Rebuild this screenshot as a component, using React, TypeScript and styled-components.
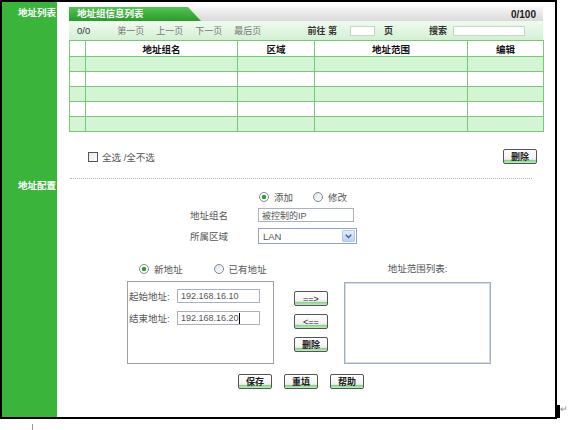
import React from 'react';
import styled, { createGlobalStyle } from 'styled-components';

// 地址组配置页面
const GlobalStyle = createGlobalStyle`
  html, body {
    margin: 0;
    padding: 0;
    background: #fff;
  }
  body {
    font-family: "Liberation Sans", "Noto Sans CJK SC", sans-serif;
    font-size: 10px;
    color: #333;
  }
`;

const Page = styled.div`
  position: relative;
  width: 570px;
  height: 430px;
`;

const Frame = styled.div`
  box-sizing: border-box;
  width: 557px;
  height: 419px;
  border: 2px solid #000;
  display: grid;
  grid-template-columns: 55px 1fr;
  grid-template-rows: 174px 1fr;
`;

const SideCell = styled.div<{ $top: number }>`
  background: #3bb43b;
  color: #fff;
  font-weight: bold;
  font-size: 9.5px;
  line-height: 12px;
  padding: ${p => p.$top}px 0 0 16px;
  white-space: nowrap;
`;

const ListSection = styled.div`
  padding: 5px 0 0 12px;
`;

const Panel = styled.div`
  width: 474px;
`;

const HeaderBar = styled.div`
  display: flex;
  align-items: center;
  height: 14px;
  background: linear-gradient(#f7f7f7, #d9d9d9);
`;

const Tab = styled.div`
  box-sizing: border-box;
  width: 132px;
  height: 14px;
  padding-left: 8px;
  background: linear-gradient(#56c456, #2a9a2a);
  clip-path: polygon(0 0, calc(100% - 13px) 0, 100% 100%, 0 100%);
  color: #fff;
  font-weight: bold;
  font-size: 9.5px;
  line-height: 14px;
`;

const Count = styled.div`
  margin-left: auto;
  padding-right: 7px;
  font-weight: bold;
  font-size: 10px;
  color: #222;
`;

const Toolbar = styled.div`
  display: flex;
  align-items: center;
  height: 19px;
  padding: 0 18px 0 8px;
  background: linear-gradient(#f0fbf0, #d3f0d3);
  font-size: 9px;
`;

const PageInfo = styled.span`
  color: #333;
  font-size: 9.5px;
`;

const NavGroup = styled.div`
  display: flex;
  gap: 12px;
  margin-left: 27px;
`;

const NavLink = styled.span`
  color: #777;
`;

const JumpGroup = styled.div`
  display: flex;
  align-items: center;
  margin-left: auto;
`;

const BoldText = styled.span<{ $gap?: number }>`
  font-weight: bold;
  color: #333;
  margin-left: ${p => p.$gap ?? 0}px;
`;

const MiniInput = styled.div<{ $w: number; $gap: number }>`
  box-sizing: border-box;
  width: ${p => p.$w}px;
  height: 10px;
  margin-left: ${p => p.$gap}px;
  background: #fff;
  border: 1px solid #c6d6c6;
`;

const Table = styled.table`
  width: 474px;
  border-collapse: collapse;
  table-layout: fixed;
  border: 1px solid #78c878;
`;

const Th = styled.th`
  height: 15px;
  padding: 0;
  border: 1px solid #78c878;
  background: #fff;
  font-size: 9.5px;
  font-weight: bold;
  color: #111;
`;

const Td = styled.td<{ $green: boolean }>`
  height: 14px;
  padding: 0;
  border: 1px solid #78c878;
  background: ${p => (p.$green ? '#d4f5d4' : '#fff')};
`;

const SelectRow = styled.div`
  display: flex;
  align-items: center;
  justify-content: space-between;
  width: 474px;
  height: 15px;
  margin-top: 17px;
  box-sizing: border-box;
  padding: 0 6px 0 19px;
`;

const CheckLabel = styled.label`
  display: flex;
  align-items: center;
  gap: 4px;
  color: #555;
  font-size: 9.5px;
`;

const CheckBox = styled.span`
  box-sizing: border-box;
  width: 10px;
  height: 10px;
  border: 1px solid #555;
  background: linear-gradient(135deg, #e6e6e6, #fff);
`;

const Btn = styled.button<{ $plain?: boolean }>`
  box-sizing: border-box;
  width: 34px;
  height: 15px;
  padding: 0;
  border: 1px solid #555;
  border-radius: 2px;
  background: linear-gradient(#fff 0%, #f4f4f4 62%, #e6e6e6 74%, #86d486 80%, #c2ebc2 100%);
  font-family: "Liberation Sans", "Noto Sans CJK SC", sans-serif;
  font-size: 9px;
  font-weight: ${p => (p.$plain ? 'normal' : 'bold')};
  color: #222;
  line-height: 12px;
`;

const ConfigSection = styled.div``;

const Divider = styled.div`
  width: 462px;
  margin: 2px 0 0 13px;
  border-top: 1px dotted #b5b5b5;
`;

const ModeRow = styled.div`
  display: flex;
  align-items: center;
  height: 13px;
  margin: 11px 0 0 202px;
`;

const RadioOption = styled.label<{ $space: number }>`
  display: inline-flex;
  align-items: center;
  gap: 5px;
  margin-right: ${p => p.$space}px;
  color: #555;
  font-size: 9.5px;
`;

const RadioDot = styled.span<{ $on?: boolean }>`
  box-sizing: border-box;
  width: 10px;
  height: 10px;
  border-radius: 50%;
  border: 1px solid #7d8a99;
  background: ${p =>
    p.$on
      ? 'radial-gradient(circle, #2d9e2d 0 2px, #fff 2.5px)'
      : 'linear-gradient(135deg, #dfe3e8, #fff)'};
`;

const FormGrid = styled.div`
  display: grid;
  grid-template-columns: 68px auto;
  row-gap: 6px;
  align-items: center;
  margin: 5px 0 0 133px;
`;

const FieldLabel = styled.span`
  color: #555;
  font-size: 9.5px;
`;

const TextBox = styled.div<{ $w: number; $h?: number }>`
  box-sizing: border-box;
  display: flex;
  align-items: center;
  width: ${p => p.$w}px;
  height: ${p => p.$h ?? 14}px;
  padding-left: 3px;
  border: 1px solid #a9b2bc;
  background: #fff;
  color: #555;
  font-size: 9px;
`;

const Caret = styled.span`
  width: 1px;
  height: 11px;
  background: #000;
`;

const SelectBox = styled.div`
  box-sizing: border-box;
  display: flex;
  align-items: center;
  width: 99px;
  height: 16px;
  padding-left: 4px;
  border: 1px solid #8fa6c2;
  background: #fff;
  color: #555;
  font-size: 9.5px;
`;

const SelectArrow = styled.span`
  box-sizing: border-box;
  display: flex;
  align-items: center;
  justify-content: center;
  width: 13px;
  height: 12px;
  margin: 0 1px 0 auto;
  border: 1px solid #b7c8ec;
  border-radius: 1px;
  background: linear-gradient(#e4ecfc, #bccff3);
`;

const AddressArea = styled.div`
  display: flex;
  align-items: flex-start;
  margin: 19px 0 0 70px;
`;

const LeftCol = styled.div`
  width: 147px;
`;

const TypeRow = styled.div`
  display: flex;
  align-items: center;
  height: 12px;
  padding-left: 12px;
`;

const RangeBox = styled.div`
  box-sizing: border-box;
  height: 83px;
  margin-top: 6px;
  padding: 7px 0 0 1px;
  border: 1px solid #a0a0a0;
  display: flex;
  flex-direction: column;
  gap: 8px;
`;

const RangeRow = styled.div`
  display: flex;
  align-items: center;
`;

const RangeLabel = styled.span`
  width: 48px;
  color: #555;
  font-size: 9.5px;
`;

const MiddleCol = styled.div`
  display: flex;
  flex-direction: column;
  gap: 8px;
  margin-left: 20px;
  padding-top: 28px;
`;

const RightCol = styled.div`
  width: 147px;
  margin-left: 16px;
`;

const ListTitle = styled.div`
  height: 12px;
  line-height: 12px;
  text-align: center;
  color: #555;
  font-size: 9.5px;
`;

const ListBox = styled.div`
  box-sizing: border-box;
  height: 82px;
  margin-top: 7px;
  border: 1px solid #9fb1c1;
  box-shadow: inset 0 0 0 1px #d3dce4;
  background: #fff;
`;

const ActionRow = styled.div`
  display: flex;
  gap: 12px;
  margin: 10px 0 0 181px;
`;

const EndCursor = styled.span`
  position: absolute;
  left: 556px;
  top: 405px;
  width: 4px;
  height: 13px;
  background: #000;
`;

const ReturnMark = styled.span`
  position: absolute;
  left: 560px;
  top: 404px;
  font-size: 9px;
  color: #888;
`;

const StrayMark = styled.span`
  position: absolute;
  left: 32px;
  top: 424px;
  width: 1px;
  height: 6px;
  background: #999;
`;

const headers = ['', '地址组名', '区域', '地址范围', '编辑'];
const widths = [16, 152, 77, 153, 76];
const rows = [0, 1, 2, 3, 4];

const Chevron = () => (
  <svg width="7" height="5" viewBox="0 0 7 5">
    <path d="M0.8 0.8 L3.5 3.5 L6.2 0.8" fill="none" stroke="#4a5f86" strokeWidth="1.4" />
  </svg>
);

const App: React.FC = () => {
  return (
    <Page>
      <GlobalStyle />
      <Frame>
        <SideCell $top={5}>地址列表</SideCell>
        <ListSection>
          <Panel>
            <HeaderBar>
              <Tab>地址组信息列表</Tab>
              <Count>0/100</Count>
            </HeaderBar>
            <Toolbar>
              <PageInfo>0/0</PageInfo>
              <NavGroup>
                <NavLink>第一页</NavLink>
                <NavLink>上一页</NavLink>
                <NavLink>下一页</NavLink>
                <NavLink>最后页</NavLink>
              </NavGroup>
              <JumpGroup>
                <BoldText>前往 第</BoldText>
                <MiniInput $w={25} $gap={13} />
                <BoldText $gap={9}>页</BoldText>
                <BoldText $gap={36}>搜索</BoldText>
                <MiniInput $w={72} $gap={6} />
              </JumpGroup>
            </Toolbar>
            <Table>
              <colgroup>
                {widths.map((w, i) => (
                  <col key={i} style={{ width: w }} />
                ))}
              </colgroup>
              <thead>
                <tr>
                  {headers.map((h, i) => (
                    <Th key={i}>{h}</Th>
                  ))}
                </tr>
              </thead>
              <tbody>
                {rows.map(r => (
                  <tr key={r}>
                    {headers.map((_, i) => (
                      <Td key={i} $green={r % 2 === 0} />
                    ))}
                  </tr>
                ))}
              </tbody>
            </Table>
          </Panel>
          <SelectRow>
            <CheckLabel>
              <CheckBox />
              全选 /全不选
            </CheckLabel>
            <Btn>删除</Btn>
          </SelectRow>
        </ListSection>

        <SideCell $top={4}>地址配置</SideCell>
        <ConfigSection>
          <Divider />
          <ModeRow>
            <RadioOption $space={20}>
              <RadioDot $on />
              添加
            </RadioOption>
            <RadioOption $space={0}>
              <RadioDot />
              修改
            </RadioOption>
          </ModeRow>
          <FormGrid>
            <FieldLabel>地址组名</FieldLabel>
            <TextBox $w={96}>被控制的IP</TextBox>
            <FieldLabel>所属区域</FieldLabel>
            <SelectBox>
              LAN
              <SelectArrow>
                <Chevron />
              </SelectArrow>
            </SelectBox>
          </FormGrid>
          <AddressArea>
            <LeftCol>
              <TypeRow>
                <RadioOption $space={31}>
                  <RadioDot $on />
                  新地址
                </RadioOption>
                <RadioOption $space={0}>
                  <RadioDot />
                  已有地址
                </RadioOption>
              </TypeRow>
              <RangeBox>
                <RangeRow>
                  <RangeLabel>起始地址:</RangeLabel>
                  <TextBox $w={83} $h={14}>192.168.16.10</TextBox>
                </RangeRow>
                <RangeRow>
                  <RangeLabel>结束地址:</RangeLabel>
                  <TextBox $w={83} $h={14}>
                    192.168.16.20
                    <Caret />
                  </TextBox>
                </RangeRow>
              </RangeBox>
            </LeftCol>
            <MiddleCol>
              <Btn $plain>==&gt;</Btn>
              <Btn $plain>&lt;==</Btn>
              <Btn>删除</Btn>
            </MiddleCol>
            <RightCol>
              <ListTitle>地址范围列表:</ListTitle>
              <ListBox />
            </RightCol>
          </AddressArea>
          <ActionRow>
            <Btn>保存</Btn>
            <Btn>重填</Btn>
            <Btn>帮助</Btn>
          </ActionRow>
        </ConfigSection>
      </Frame>
      <EndCursor />
      <ReturnMark>↵</ReturnMark>
      <StrayMark />
    </Page>
  );
};

export default App;
